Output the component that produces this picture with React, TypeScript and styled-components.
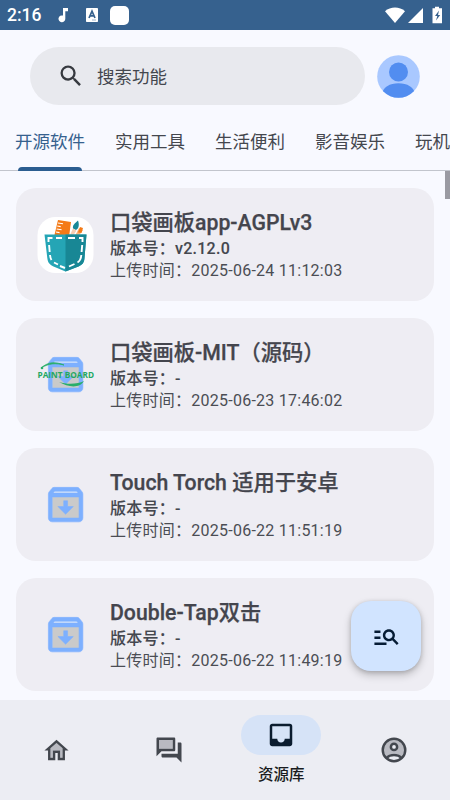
import React from "react";
import styled, { createGlobalStyle } from "styled-components";
import { MdSearch, MdManageSearch, MdInbox } from "react-icons/md";

const GlobalStyle = createGlobalStyle`
  * { box-sizing: border-box; }
  body {
    margin: 0;
    background: #f8f9ff;
    font-family: Roboto, "Noto Sans CJK SC", sans-serif;
  }
`;

const Screen = styled.div`
  position: relative;
  width: 450px;
  height: 800px;
  overflow: hidden;
  display: flex;
  flex-direction: column;
  background: #f8f9ff;
  color: #44474e;
`;

const StatusBar = styled.div`
  flex: none;
  height: 30px;
  padding: 0 7px;
  display: flex;
  justify-content: space-between;
  background: #36618e;
  color: #fff;
`;

const StatusGroup = styled.div`
  display: flex;
  align-items: center;
`;

const Clock = styled.span`
  width: 51px;
  font-size: 17.5px;
  font-weight: 500;
  line-height: 32px;
`;

const NoteIcons = styled.span`
  display: flex;
  align-items: center;
  gap: 16px;
`;

const AppBadge = styled.span`
  width: 19px;
  height: 19px;
  margin-left: 12px;
  border-radius: 5px;
  background: #fff;
`;

const Header = styled.header`
  flex: none;
  height: 92px;
  padding: 17px 30px 0;
  display: flex;
  align-items: flex-start;
  gap: 12px;
`;

const SearchField = styled.div`
  width: 335px;
  height: 58px;
  padding-left: 27px;
  border-radius: 29px;
  display: flex;
  align-items: center;
  gap: 12px;
  background: #e8e9ee;
  font-size: 17.5px;
  color: #44474e;

  svg { color: #36393f; }
`;

const SearchHint = styled.span`
  margin-top: -2px;
`;

const Avatar = styled.svg`
  display: block;
  flex: none;
  margin-top: 8px;
`;

const Tabs = styled.nav`
  flex: none;
  height: 49px;
  padding: 0 15px;
  display: flex;
  gap: 30px;
  border-bottom: 1px solid #c2c5cd;
`;

const Tab = styled.div<{ $active?: boolean }>`
  position: relative;
  flex: none;
  width: 70px;
  font-size: 17.5px;
  line-height: 40px;
  white-space: nowrap;
  color: ${(p) => (p.$active ? "#36618e" : "#44474e")};
`;

const TabIndicator = styled.span`
  position: absolute;
  left: 3px;
  right: 3px;
  bottom: -1px;
  height: 4px;
  border-radius: 4px 4px 0 0;
  background: #2b5d90;
`;

const List = styled.main`
  flex: 1;
  min-height: 0;
  overflow: hidden;
  padding: 17px 16px 0;
  display: flex;
  flex-direction: column;
  gap: 17px;
`;

const Card = styled.article`
  flex: none;
  height: 113px;
  padding: 0 20px;
  border-radius: 20px;
  display: flex;
  align-items: center;
  gap: 15px;
  background: #eeedf3;
`;

const Thumb = styled.div`
  flex: none;
  width: 59px;
  height: 58px;
  display: grid;
  place-items: center;
`;

const CardText = styled.div`
  white-space: nowrap;
`;

const Title = styled.div`
  font-size: 21.25px;
  font-weight: 500;
  line-height: 30px;
  color: #44454d;
  -webkit-text-stroke: 0.25px #44454d;
`;

const Version = styled.div`
  font-size: 16px;
  font-weight: 500;
  line-height: 22px;
  letter-spacing: 0.25px;
  -webkit-text-stroke: 0.1px #44474e;
`;

const Uploaded = styled.div`
  font-size: 16px;
  line-height: 22px;
  letter-spacing: 0.25px;
  color: #4b4d54;
`;

const Scrollbar = styled.div`
  position: absolute;
  top: 171px;
  right: 0;
  width: 5px;
  height: 28px;
  background: #9a9aa2;
`;

const Fab = styled.button`
  position: absolute;
  left: 351px;
  top: 601px;
  width: 70px;
  height: 70px;
  padding: 0;
  border: 0;
  border-radius: 20px;
  display: grid;
  place-items: center;
  background: #d1e4ff;
  color: #061c35;
  box-shadow: 0 4px 9px rgba(0, 0, 0, 0.22), 0 1px 4px rgba(0, 0, 0, 0.16);
`;

const BottomNav = styled.nav`
  flex: none;
  height: 100px;
  display: grid;
  grid-template-columns: repeat(4, 1fr);
  background: #ecedf3;
`;

const NavItem = styled.div<{ $active?: boolean }>`
  display: flex;
  flex-direction: column;
  align-items: center;
  justify-content: ${(p) => (p.$active ? "flex-start" : "center")};
  padding-top: ${(p) => (p.$active ? "15px" : "0")};
  color: ${(p) => (p.$active ? "#0b1c2f" : "#43474e")};
`;

const NavPill = styled.span`
  width: 80px;
  height: 40px;
  border-radius: 20px;
  display: grid;
  place-items: center;
  background: #d6e3f7;
`;

const NavLabel = styled.span`
  margin-top: 9px;
  font-size: 15.5px;
  font-weight: 500;
  line-height: 22px;
  color: #191c20;
`;

const PaintStack = styled.div`
  position: relative;
  display: grid;
  place-items: center;
`;

const PaintOverlay = styled.svg`
  position: absolute;
  left: -6px;
  top: 0;
  overflow: visible;
`;

function MusicIcon() {
  return (
    <svg width="12" height="16" viewBox="0 0 12 16" fill="#fff">
      <path d="M5 1h5v3.2H7.3v7.6A3.4 3.4 0 1 1 5 8.6z" />
    </svg>
  );
}

function InputMethodIcon() {
  return (
    <svg width="12" height="14" viewBox="0 0 12 14">
      <rect width="12" height="14" rx="0.8" fill="#fff" />
      <path d="M3 10 6 3.2 9 10M4 7.9h4" stroke="#36618e" strokeWidth="1.7" fill="none" />
      <path d="M6 12h4" stroke="#9fb4cb" strokeWidth="1" />
    </svg>
  );
}

function SystemIcons() {
  return (
    <svg width="58" height="18" viewBox="0 0 58 18" fill="#fff">
      <path d="M0 5.2C5.5.3 14.5.3 20 5.2L10 17z" />
      <path d="M38 2v15H23z" />
      <path d="M50 .8h4v1.5h3v15h-9.5v-15H50z" />
      <path d="m54 4.5-4 5.5h2.3L51 14.5 55.2 9H53z" fill="#36618e" />
    </svg>
  );
}

function PocketLogo() {
  return (
    <svg width="58" height="58" viewBox="0 0 58 58">
      <rect x="0.5" y="1" width="56" height="56" rx="18" fill="#fff" />
      <path d="m21 4 13 2-2 15H17z" fill="#f47a16" />
      <path d="m21 7 5 .8M20.2 10l3.5.6M19.6 13l5 .8M19 16l3.5.6" stroke="#fff" strokeWidth="1.1" />
      <path d="M41 4.5c1.5 4 1 8-2 9.5l-3-1.6c-.5-3.4 2-5.2 5-7.9z" fill="#158897" />
      <path d="m36 12.5 3.4 2L36 20h-3.5z" fill="#f6cdb3" />
      <path d="m42 12 4 2-5 7h-3.5z" fill="#f9b27c" />
      <path d="m43 11 3 1-1.5 5-3.5-.5z" fill="#f47a16" />
      <path d="M7.5 18.5h42l-2 23.5c-.4 5-2 6.5-6 8.5l-13 5-12-5c-4-2-5.7-4-6.2-8.5z" fill="#25a5b5" />
      <path d="M28.5 18.5h21l-2 23.5c-.4 5-2 6.5-6 8.5l-13 5z" fill="#188795" />
      <path
        d="M11.5 26v-4h4M19 22h6M31 22h7M42 22h3.5v4M45.2 29l-.6 7M44.3 39c-.3 4-1.3 6-3.8 7.5M37.5 48l-5.5 2.5M28 52l-5-2M21 48.5l-4-2M14.5 44c-1-1.5-1.3-3-1.5-5M12.7 36l-.6-7"
        fill="none"
        stroke="#fff"
        strokeWidth="1.9"
      />
    </svg>
  );
}

function ArchiveIcon() {
  return (
    <svg width="46" height="46" viewBox="0.2 0.2 24 24" fill="#7db0ff" stroke="#7db0ff" strokeWidth="0.3">
      <path d="M5 8h14v11H5z" fill="#cacaca" stroke="none" />
      <path d="M5.42 6l.82-1h11.52l.83 1z" fill="#d6e4fa" stroke="none" />
      <path d="M20.54 5.23l-1.39-1.68C18.88 3.21 18.47 3 18 3H6c-.47 0-.88.21-1.16.55L3.46 5.23C3.17 5.57 3 6.02 3 6.5V19c0 1.1.9 2 2 2h14c1.1 0 2-.9 2-2V6.5c0-.48-.17-.93-.46-1.27zM6.24 5h11.52l.83 1H5.42l.82-1zM5 19V8h14v11H5zm8-9h-2v3H8l4 4 4-4h-3v-3z" />
    </svg>
  );
}

function PaintBoardLogo() {
  return (
    <PaintStack>
      <ArchiveIcon />
      <PaintOverlay width="58" height="46" viewBox="0 0 58 46">
        <path d="M4 16C12 9 19 10 27 13 19 11 12 11 4 16z" fill="#29ae69" stroke="#29ae69" strokeWidth=".8" />
        <circle cx="5" cy="16" r="1.3" fill="#29ae69" />
        <path d="M22 30C31 35 42 37 47 29 41 32 31 33 22 30z" fill="#29ae69" />
        <text
          x="0.5"
          y="25.6"
          textLength="56.5"
          lengthAdjust="spacingAndGlyphs"
          fontFamily="Open Sans, sans-serif"
          fontWeight="700"
          fontSize="8.5"
          fill="#22a861"
        >
          PAINT BOARD
        </text>
      </PaintOverlay>
    </PaintStack>
  );
}

function HomeIcon() {
  return (
    <svg width="29" height="29" viewBox="0 0 24 24" fill="currentColor">
      <path opacity=".3" d="M7 10.19V18h2v-6h6v6h2v-7.81l-5-4.5z" />
      <path d="M12 3L2 12h3v8h6v-6h2v6h6v-8h3L12 3zm5 15h-2v-6H9v6H7v-7.81l5-4.5 5 4.5V18z" />
    </svg>
  );
}

function ForumIcon() {
  return (
    <svg width="30" height="30" viewBox="0 0 24 24" fill="currentColor">
      <path opacity=".3" d="M15 11V4H4v7z" />
      <path d="M16 13c.55 0 1-.45 1-1V3c0-.55-.45-1-1-1H3c-.55 0-1 .45-1 1v14l4-4h10zM4 4h11v7H4V4zM21 6h-2v9H6v2c0 .55.45 1 1 1h11l4 4V7c0-.55-.45-1-1-1z" />
    </svg>
  );
}

function AccountIcon() {
  return (
    <svg width="30" height="30" viewBox="0 0 24 24" fill="none" stroke="currentColor" strokeWidth="2">
      <path
        d="M5.86 17.12C7.55 15.8 9.68 15 12 15s4.45.8 6.14 2.12A8 8 0 1 0 5.86 17.12zM12 7a2.5 2.5 0 1 1 0 5 2.5 2.5 0 0 1 0-5z"
        fill="currentColor"
        fillOpacity=".3"
        fillRule="evenodd"
        stroke="none"
      />
      <circle cx="12" cy="12" r="9" />
      <circle cx="12" cy="9.5" r="2.5" />
      <path d="M6 18.3C9.3 15.3 14.7 15.3 18 18.3" />
    </svg>
  );
}

const tabs = ["开源软件", "实用工具", "生活便利", "影音娱乐", "玩机"];

const apps = [
  { title: "口袋画板app-AGPLv3", version: "v2.12.0", time: "2025-06-24 11:12:03", icon: <PocketLogo /> },
  { title: "口袋画板-MIT（源码）", version: "-", time: "2025-06-23 17:46:02", icon: <PaintBoardLogo /> },
  { title: "Touch Torch 适用于安卓", version: "-", time: "2025-06-22 11:51:19", icon: <ArchiveIcon /> },
  { title: "Double-Tap双击", version: "-", time: "2025-06-22 11:49:19", icon: <ArchiveIcon /> },
];

export default function App() {
  return (
    <Screen>
      <GlobalStyle />
      <StatusBar>
        <StatusGroup>
          <Clock>2:16</Clock>
          <NoteIcons>
            <MusicIcon />
            <InputMethodIcon />
          </NoteIcons>
          <AppBadge />
        </StatusGroup>
        <StatusGroup>
          <SystemIcons />
        </StatusGroup>
      </StatusBar>

      <Header>
        <SearchField>
          <MdSearch size={28} />
          <SearchHint>搜索功能</SearchHint>
        </SearchField>
        <Avatar width="43" height="43" viewBox="0 0 43 43">
          <defs>
            <clipPath id="avatarClip">
              <circle cx="21.5" cy="21.5" r="21.3" />
            </clipPath>
          </defs>
          <g clipPath="url(#avatarClip)">
            <rect width="43" height="43" fill="#a9c8ff" />
            <circle cx="21.5" cy="17" r="9.5" fill="#528df0" />
            <ellipse cx="21.5" cy="38" rx="16" ry="9.7" fill="#528df0" />
          </g>
        </Avatar>
      </Header>

      <Tabs>
        {tabs.map((label, i) => (
          <Tab key={label} $active={i === 0}>
            {label}
            {i === 0 && <TabIndicator />}
          </Tab>
        ))}
      </Tabs>

      <List>
        {apps.map((app) => (
          <Card key={app.title}>
            <Thumb>{app.icon}</Thumb>
            <CardText>
              <Title>{app.title}</Title>
              <Version>版本号：{app.version}</Version>
              <Uploaded>上传时间：{app.time}</Uploaded>
            </CardText>
          </Card>
        ))}
      </List>

      <Scrollbar />
      <Fab aria-label="筛选">
        <MdManageSearch size={29} />
      </Fab>

      <BottomNav>
        <NavItem>
          <HomeIcon />
        </NavItem>
        <NavItem>
          <ForumIcon />
        </NavItem>
        <NavItem $active>
          <NavPill>
            <MdInbox size={30} />
          </NavPill>
          <NavLabel>资源库</NavLabel>
        </NavItem>
        <NavItem>
          <AccountIcon />
        </NavItem>
      </BottomNav>
    </Screen>
  );
}
